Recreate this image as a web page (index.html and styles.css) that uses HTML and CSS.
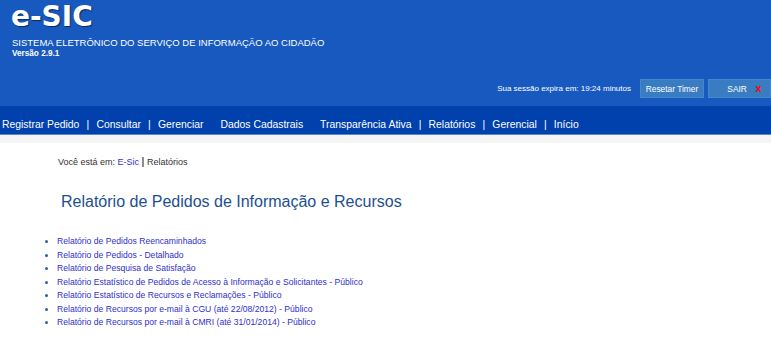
FILE: index.html
```html
<!DOCTYPE html>
<html lang="pt-BR">
<head>
    <meta charset="UTF-8">
    <meta name="viewport" content="width=device-width, initial-scale=1.0">
    <title>e-SIC - Relatórios</title>
    <link rel="stylesheet" href="styles.css">
</head>
<body>
    <div class="topo">
        <div class="marca">
            <h1 class="titulo">e-SIC</h1>
            <p class="subtitulo">SISTEMA ELETRÔNICO DO SERVIÇO DE INFORMAÇÃO AO CIDADÃO</p>
            <p class="versao">Versão 2.9.1</p>
        </div>
        <div class="sessao">
            <span class="sessao-texto">Sua sessão expira em: 19:24 minutos</span>
            <button type="button" class="botao">Resetar Timer</button>
            <button type="button" class="botao botao-sair">SAIR <span class="fechar">x</span></button>
        </div>
    </div>

    <div class="menu">
        <a href="#">Registrar Pedido</a><span class="sep">|</span>
        <a href="#">Consultar</a><span class="sep">|</span>
        <a href="#">Gerenciar</a><span class="sep"></span>
        <a href="#">Dados Cadastrais</a><span class="sep"></span>
        <a href="#">Transparência Ativa</a><span class="sep">|</span>
        <a href="#">Relatórios</a><span class="sep">|</span>
        <a href="#">Gerencial</a><span class="sep">|</span>
        <a href="#">Início</a>
    </div>
    <div class="faixa"></div>

    <div class="conteudo">
        <p class="migalha">Você está em: <a href="#">E-Sic</a> <span class="barra">|</span> Relatórios</p>

        <h2 class="cabecalho">Relatório de Pedidos de Informação e Recursos</h2>

        <ul class="relatorios">
            <li><a href="#">Relatório de Pedidos Reencaminhados</a></li>
            <li><a href="#">Relatório de Pedidos - Detalhado</a></li>
            <li><a href="#">Relatório de Pesquisa de Satisfação</a></li>
            <li><a href="#">Relatório Estatístico de Pedidos de Acesso à Informação e Solicitantes - Público</a></li>
            <li><a href="#">Relatório Estatístico de Recursos e Reclamações - Público</a></li>
            <li><a href="#">Relatório de Recursos por e-mail à CGU (até 22/08/2012) - Público</a></li>
            <li><a href="#">Relatório de Recursos por e-mail à CMRI (até 31/01/2014) - Público</a></li>
        </ul>
    </div>
</body>
</html>
```

FILE: styles.css
```css
body {
    font-family: "Liberation Sans", Arial, sans-serif;
    margin: 0;
    background-color: #fff;
    color: #333;
}
.topo {
    background-color: #1759bf;
    height: 106px;
    display: flex;
    justify-content: space-between;
    align-items: flex-end;
    color: #fff;
}
.marca {
    align-self: flex-start;
    padding-left: 11px;
}
.titulo {
    font-family: "DejaVu Sans", Verdana, sans-serif;
    font-size: 28px;
    font-weight: bold;
    line-height: 33px;
    margin: 0;
    text-shadow: 1px 1px 1px #0b2a5c;
}
.subtitulo {
    font-size: 9.5px;
    margin: 4px 0 0 1px;
    line-height: 11px;
}
.versao {
    font-size: 8.2px;
    font-weight: bold;
    margin: 1px 0 0 1px;
    line-height: 10px;
}
.sessao {
    display: flex;
    align-items: center;
    padding-bottom: 8px;
}
.sessao-texto {
    font-size: 8px;
    margin-right: 5px;
}
.botao {
    font-family: "Liberation Sans", Arial, sans-serif;
    font-size: 8.4px;
    color: #fff;
    background-color: #3a7cc2;
    border: 1px solid #4686cb;
    height: 19px;
    width: 64px;
    padding: 0;
    margin-left: 4px;
}
.botao-sair {
    width: 63px;
    padding: 0 0 0 10px;
    text-align: center;
}
.fechar {
    color: #e8101a;
    font-family: "DejaVu Sans", sans-serif;
    font-weight: bold;
    font-size: 10px;
    margin-left: 6px;
}
.menu {
    background-color: #0041ad;
    height: 29px;
    box-sizing: border-box;
    padding-top: 8px;
    border-bottom: 1px solid #5a86d0;
    display: flex;
    align-items: center;
    padding-left: 2px;
    font-size: 10.4px;
}
.menu a {
    color: #fff;
    text-decoration: none;
}
.sep {
    color: #fff;
    width: 17px;
    text-align: center;
}
.faixa {
    height: 8px;
    background-color: #f5f5f5;
}
.conteudo {
    padding-left: 58px;
}
.migalha {
    font-size: 9px;
    margin: 12px 0 0;
}
.migalha a {
    color: #2f2fe0;
    text-decoration: none;
}
.barra {
    color: #000;
    font-size: 11px;
}
.cabecalho {
    font-size: 16px;
    font-weight: normal;
    color: #1d4f91;
    margin: 26px 0 0 3px;
}
.relatorios {
    margin: 24px 0 0 -12px;
    padding-left: 11px;
    font-size: 8.6px;
    line-height: 13.5px;
    color: #2e5fa0;
}
.relatorios a {
    color: #2f2fcc;
    text-decoration: none;
}
```
